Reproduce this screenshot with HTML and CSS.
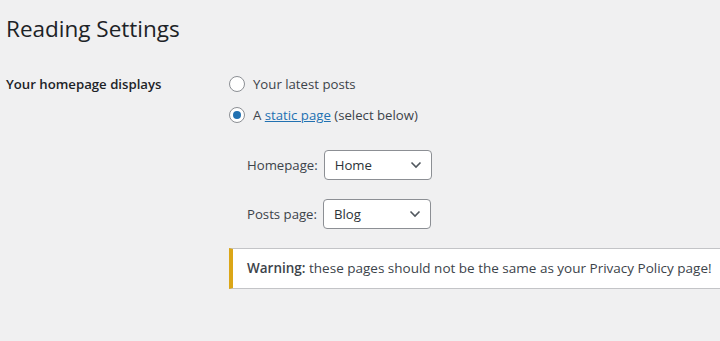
FILE: index.html
```html
<!DOCTYPE html>
<html lang="en">
<head>
  <meta charset="UTF-8" />
  <meta name="viewport" content="width=device-width, initial-scale=1.0"/>
  <title>Reading Settings</title>
  <link rel="stylesheet" href="styles.css">
</head>
<body>

  <h1 class="page-title">Reading Settings</h1>

  <form class="settings-row">
    <div class="row-label">Your homepage displays</div>

    <div class="row-field">
      <label class="radio-line">
        <input type="radio" name="show_on_front" value="posts" />
        <span>Your latest posts</span>
      </label>
      <label class="radio-line">
        <input type="radio" name="show_on_front" value="page" checked />
        <span>A <a href="#" class="link">static page</a> (select below)</span>
      </label>

      <div class="page-selects">
        <div class="select-line">
          <span class="select-label">Homepage:</span>
          <div class="select-box home">
            <select>
              <option>Home</option>
            </select>
            <svg class="chevron" width="12" height="8" viewBox="0 0 12 8"><path d="M1.5 1.5 L6 6 L10.5 1.5" fill="none" stroke="#50575e" stroke-width="1.6"/></svg>
          </div>
        </div>
        <div class="select-line">
          <span class="select-label">Posts page:</span>
          <div class="select-box blog">
            <select>
              <option>Blog</option>
            </select>
            <svg class="chevron" width="12" height="8" viewBox="0 0 12 8"><path d="M1.5 1.5 L6 6 L10.5 1.5" fill="none" stroke="#50575e" stroke-width="1.6"/></svg>
          </div>
        </div>
      </div>

      <div class="notice">
        <strong>Warning:</strong> these pages should not be the same as your Privacy Policy page!
      </div>
    </div>
  </form>

</body>
</html>
```

FILE: styles.css
```css
body {
  margin: 0;
  padding: 0 0 0 6px;
  background: #f0f0f1;
  color: #1d2327;
  font-family: "Open Sans", "Noto Sans", sans-serif;
  font-size: 13.2px;
  overflow: hidden;
}

.page-title {
  margin: 12px 0 0;
  font-size: 22.5px;
  font-weight: 400;
  line-height: 34px;
  color: #1d2327;
}

.settings-row {
  display: flex;
  margin-top: 28px;
}

.row-label {
  width: 223px;
  flex-shrink: 0;
  font-weight: 600;
  line-height: 20px;
}

.row-field {
  flex: 1;
  min-width: 0;
}

.radio-line {
  display: flex;
  align-items: center;
  height: 20px;
  margin-bottom: 11px;
  color: #3c434a;
}

.radio-line input {
  appearance: none;
  width: 16px;
  height: 16px;
  margin: 0 8px 0 0;
  border: 1px solid #8c8f94;
  border-radius: 50%;
  background: #fff;
  display: grid;
  place-content: center;
}

.radio-line input:checked::before {
  content: "";
  width: 8px;
  height: 8px;
  border-radius: 50%;
  background: #2271b1;
}

.link {
  color: #2271b1;
}

.page-selects {
  padding-left: 18px;
  padding-top: 14px;
}

.select-line {
  display: flex;
  align-items: center;
  margin-bottom: 19px;
  color: #3c434a;
}

.select-label {
  margin-right: 6px;
}

.select-box {
  position: relative;
}

.select-box select {
  appearance: none;
  width: 108px;
  height: 30px;
  padding: 0 24px 0 10px;
  border: 1px solid #8c8f94;
  border-radius: 4px;
  background: #fff;
  color: #2c3338;
  font-family: inherit;
  font-size: 13.2px;
}

.chevron {
  position: absolute;
  right: 10px;
  top: 11px;
  pointer-events: none;
}

.notice {
  margin-top: 8px;
  margin-right: -20px;
  padding: 10px 14px;
  background: #fff;
  border: 1px solid #c3c4c7;
  border-left: 4px solid #dba617;
  box-shadow: 0 1px 1px rgba(0,0,0,0.04);
  font-size: 13.5px;
  line-height: 19px;
  color: #3c434a;
  white-space: nowrap;
}

.notice strong {
  font-weight: 600;
  color: #3c434a;
}
```
